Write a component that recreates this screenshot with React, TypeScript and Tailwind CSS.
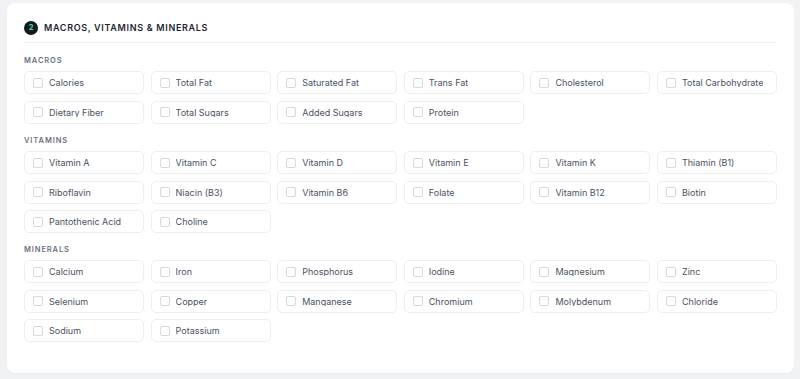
import React from "react";

const sections: { title: string; items: string[] }[] = [
  {
    title: "Macros",
    items: [
      "Calories",
      "Total Fat",
      "Saturated Fat",
      "Trans Fat",
      "Cholesterol",
      "Total Carbohydrate",
      "Dietary Fiber",
      "Total Sugars",
      "Added Sugars",
      "Protein",
    ],
  },
  {
    title: "Vitamins",
    items: [
      "Vitamin A",
      "Vitamin C",
      "Vitamin D",
      "Vitamin E",
      "Vitamin K",
      "Thiamin (B1)",
      "Riboflavin",
      "Niacin (B3)",
      "Vitamin B6",
      "Folate",
      "Vitamin B12",
      "Biotin",
      "Pantothenic Acid",
      "Choline",
    ],
  },
  {
    title: "Minerals",
    items: [
      "Calcium",
      "Iron",
      "Phosphorus",
      "Iodine",
      "Magnesium",
      "Zinc",
      "Selenium",
      "Copper",
      "Manganese",
      "Chromium",
      "Molybdenum",
      "Chloride",
      "Sodium",
      "Potassium",
    ],
  },
];

function NutrientOption({ label }: { label: string }) {
  return (
    <label className="flex h-[23px] items-center gap-[6px] rounded-[5px] border border-[#eceef1] bg-white pl-[8px] pr-2 cursor-pointer">
      <input type="checkbox" className="peer sr-only" />
      <span className="h-[10px] w-[10px] shrink-0 rounded-[2px] border border-[#d5d8dd] bg-white" />
      <span className="text-[9px] leading-none text-[#4b5262] truncate">{label}</span>
    </label>
  );
}

export default function App() {
  return (
    <div
      className="min-h-[379px] bg-[#f1f2f4] pl-[7px] pr-[6px] pt-[3px] pb-[7px]"
      style={{ fontFamily: "Inter, 'Noto Sans', sans-serif" }}
    >
      <div className="rounded-[8px] bg-white px-[17px] pt-[18px] pb-[31px] shadow-[0_1px_2px_rgba(0,0,0,0.04)]">
        <div className="flex items-center gap-[6px] border-b border-[#eef0f2] pb-[7px]">
          <span className="flex h-[14px] w-[14px] items-center justify-center rounded-full bg-[#111a24] text-[7.5px] font-bold text-[#4ade80]">
            2
          </span>
          <h2 className="text-[9px] font-semibold uppercase tracking-[0.075em] text-[#1f2533]">
            Macros, Vitamins &amp; Minerals
          </h2>
        </div>

        <div className="flex flex-col gap-[11px] pt-[12px]">
          {sections.map((s) => (
            <div key={s.title}>
              <div className="mb-[5px] text-[7.5px] font-semibold uppercase tracking-[0.12em] text-[#6b7280]">
                {s.title}
              </div>
              <div className="grid grid-cols-6 gap-x-[6.6px] gap-y-[6.5px]">
                {s.items.map((item) => (
                  <NutrientOption key={item} label={item} />
                ))}
              </div>
            </div>
          ))}
        </div>
      </div>
    </div>
  );
}
